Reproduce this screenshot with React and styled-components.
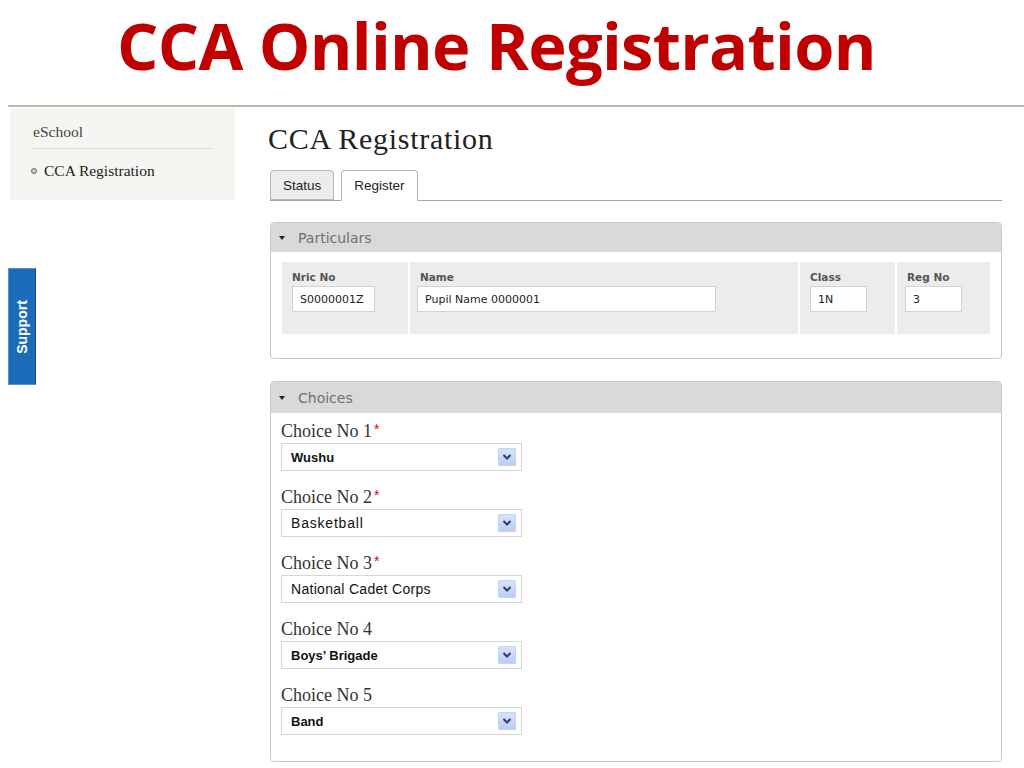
import React from 'react'
import styled, { createGlobalStyle } from 'styled-components'

const Global = createGlobalStyle`
  body {
    margin: 0;
    background: #fff;
    font-family: "Liberation Serif", serif;
  }
`

const Page = styled.div`
  width: 1024px;
  height: 768px;
  position: relative;
  overflow: hidden;
`

const Title = styled.h1`
  margin: 0;
  padding: 5px 0 0 117px;
  height: 93px;
  box-sizing: border-box;
  font-family: "Open Sans", sans-serif;
  font-weight: 700;
  font-size: 65px;
  letter-spacing: -0.7px;
  line-height: 80px;
  color: #c00000;
  white-space: nowrap;
`

const Rule = styled.div`
  margin: 12px 0 0 8px;
  height: 2px;
  background: #b9bcaa;
`

const Body = styled.div`
  display: flex;
  align-items: flex-start;
  padding-left: 10px;
`

const Sidebar = styled.div`
  width: 225px;
  height: 92px;
  background: #f5f5f2;
  padding: 14px 22px 0 23px;
  box-sizing: border-box;
  margin-top: 1px;
`

const SideTitle = styled.div`
  font-size: 15.5px;
  line-height: 20px;
  color: #444;
  padding-bottom: 6px;
  border-bottom: 1px solid #d8d8d2;
`

const SideItem = styled.div`
  display: flex;
  align-items: center;
  gap: 7px;
  margin-top: 12px;
  margin-left: -2px;
  font-size: 15.5px;
  line-height: 20px;
  color: #222;
  &::before {
    content: '';
    width: 4px;
    height: 4px;
    border: 1px solid #666;
    background: #ccc;
    border-radius: 50%;
  }
`

const Main = styled.div`
  width: 732px;
  margin-left: 35px;
  margin-top: 15px;
`

const Heading = styled.h2`
  margin: 0 0 0 -2px;
  font-weight: 400;
  font-size: 30px;
  letter-spacing: 0.7px;
  line-height: 34px;
  color: #222;
`

const Tabs = styled.div`
  display: flex;
  gap: 7px;
  margin-top: 14px;
  border-bottom: 1px solid #a8a8a8;
  height: 30px;
`

const Tab = styled.div`
  box-sizing: border-box;
  padding: 0 12px;
  display: flex;
  align-items: center;
  font-family: "Liberation Sans", Arial, sans-serif;
  font-size: 13.5px;
  color: #222;
  border: 1px solid #b5b5b5;
  border-radius: 4px 4px 0 0;
  background: ${p => (p.$active ? '#fff' : '#ececec')};
  height: ${p => (p.$active ? '31px' : '30px')};
  ${p => p.$active && 'border-bottom-color: #fff;'}
`

const Panel = styled.div`
  margin-top: ${p => p.$top}px;
  border: 1px solid #c9c9c9;
  border-radius: 4px;
  background: #fff;
  overflow: hidden;
`

const PanelHead = styled.div`
  height: ${p => p.$h}px;
  background: #d9d9d9;
  display: flex;
  align-items: center;
  gap: 13px;
  padding-left: 8px;
  font-family: "DejaVu Sans", Verdana, sans-serif;
  font-size: 14px;
  color: #707070;
  &::before {
    content: '';
    border-left: 3.5px solid transparent;
    border-right: 3.5px solid transparent;
    border-top: 4px solid #222;
  }
`

const Grid = styled.div`
  display: grid;
  grid-template-columns: 126px 388px 95px 93px;
  gap: 2px;
  margin: 10px 11px 24px 11px;
`

const Cell = styled.div`
  background: #ececec;
  height: 72px;
  padding: 9px 0 0 10px;
  box-sizing: border-box;
`

const Label = styled.div`
  font-family: "DejaVu Sans", Verdana, sans-serif;
  font-weight: 700;
  font-size: 10.5px;
  color: #555;
  margin-bottom: 3px;
`

const Field = styled.div`
  width: ${p => p.$w}px;
  height: 26px;
  box-sizing: border-box;
  border: 1px solid #d2d2d2;
  background: #fff;
  display: flex;
  align-items: center;
  padding-left: 7px;
  font-family: "DejaVu Sans", Verdana, sans-serif;
  font-size: 11px;
  color: #222;
  margin-left: ${p => p.$ml || 0}px;
`

const Choices = styled.div`
  padding: 8px 0 26px 10px;
  display: flex;
  flex-direction: column;
  gap: 16px;
`

const Choice = styled.div`
  display: flex;
  flex-direction: column;
  gap: 2px;
`

const ChoiceLabel = styled.div`
  font-size: 18px;
  line-height: 20px;
  height: 20px;
  color: #333;
  span {
    color: #e0001b;
    font-family: "Liberation Sans", Arial, sans-serif;
    font-size: 14px;
    line-height: 0;
    margin-left: 2px;
    position: relative;
    top: -3px;
  }
`

const Select = styled.div`
  width: 241px;
  height: 28px;
  box-sizing: border-box;
  border: 1px solid #d6d6d6;
  display: flex;
  align-items: center;
  justify-content: space-between;
  padding: 0 5px 0 9px;
  font-family: "Liberation Sans", Arial, sans-serif;
  font-size: ${p => (p.$bold ? 13 : 14)}px;
  font-weight: ${p => (p.$bold ? 700 : 400)};
  letter-spacing: ${p => p.$ls || 0}px;
  color: #111;
`

const Arrow = styled.div`
  width: 16px;
  height: 16px;
  background: linear-gradient(#d8e3fb, #b9cdf6);
  border: 1px solid #c6d4f2;
  border-radius: 1px;
  display: flex;
  align-items: center;
  justify-content: center;
`

const SupportTab = styled.div`
  position: absolute;
  left: 8px;
  top: 268px;
  width: 28px;
  height: 117px;
  box-sizing: border-box;
  background: #1a6cb8;
  border: 1px solid #5d8fc4;
  border-right-color: #0d4c8c;
  display: flex;
  align-items: center;
  justify-content: center;
  span {
    transform: rotate(-90deg);
    white-space: nowrap;
    color: #fff;
    font-family: "Liberation Sans", Arial, sans-serif;
    font-weight: 700;
    font-size: 14px;
  }
`

const choices = [
  { n: '1', req: true, v: 'Wushu', bold: true },
  { n: '2', req: true, v: 'Basketball', ls: 0.8 },
  { n: '3', req: true, v: 'National Cadet Corps', ls: 0.3 },
  { n: '4', v: 'Boys\u2019 Brigade', bold: true },
  { n: '5', v: 'Band', bold: true },
]

const Chevron = () => (
  <svg width="10" height="8" viewBox="0 0 10 8">
    <path d="M1.5 2 L5 5.5 L8.5 2" fill="none" stroke="#2c3e66" strokeWidth="2" />
  </svg>
)

export default function App() {
  return (
    <Page>
      <Global />
      <Title>CCA Online Registration</Title>
      <Rule />
      <Body>
        <Sidebar>
          <SideTitle>eSchool</SideTitle>
          <SideItem>CCA Registration</SideItem>
        </Sidebar>
        <Main>
          <Heading>CCA Registration</Heading>
          <Tabs>
            <Tab>Status</Tab>
            <Tab $active>Register</Tab>
          </Tabs>
          <Panel $top={21}>
            <PanelHead $h={29}>Particulars</PanelHead>
            <Grid>
              <Cell>
                <Label>Nric No</Label>
                <Field $w={83}>S0000001Z</Field>
              </Cell>
              <Cell>
                <Label>Name</Label>
                <Field $w={299} $ml={-3}>Pupil Name 0000001</Field>
              </Cell>
              <Cell>
                <Label>Class</Label>
                <Field $w={57}>1N</Field>
              </Cell>
              <Cell>
                <Label>Reg No</Label>
                <Field $w={57} $ml={-2}>3</Field>
              </Cell>
            </Grid>
          </Panel>
          <Panel $top={22}>
            <PanelHead $h={31}>Choices</PanelHead>
            <Choices>
              {choices.map(c => (
                <Choice key={c.n}>
                  <ChoiceLabel>
                    Choice No {c.n}
                    {c.req && <span>*</span>}
                  </ChoiceLabel>
                  <Select $bold={c.bold} $ls={c.ls}>
                    {c.v}
                    <Arrow>
                      <Chevron />
                    </Arrow>
                  </Select>
                </Choice>
              ))}
            </Choices>
          </Panel>
        </Main>
      </Body>
      <SupportTab>
        <span>Support</span>
      </SupportTab>
    </Page>
  )
}
